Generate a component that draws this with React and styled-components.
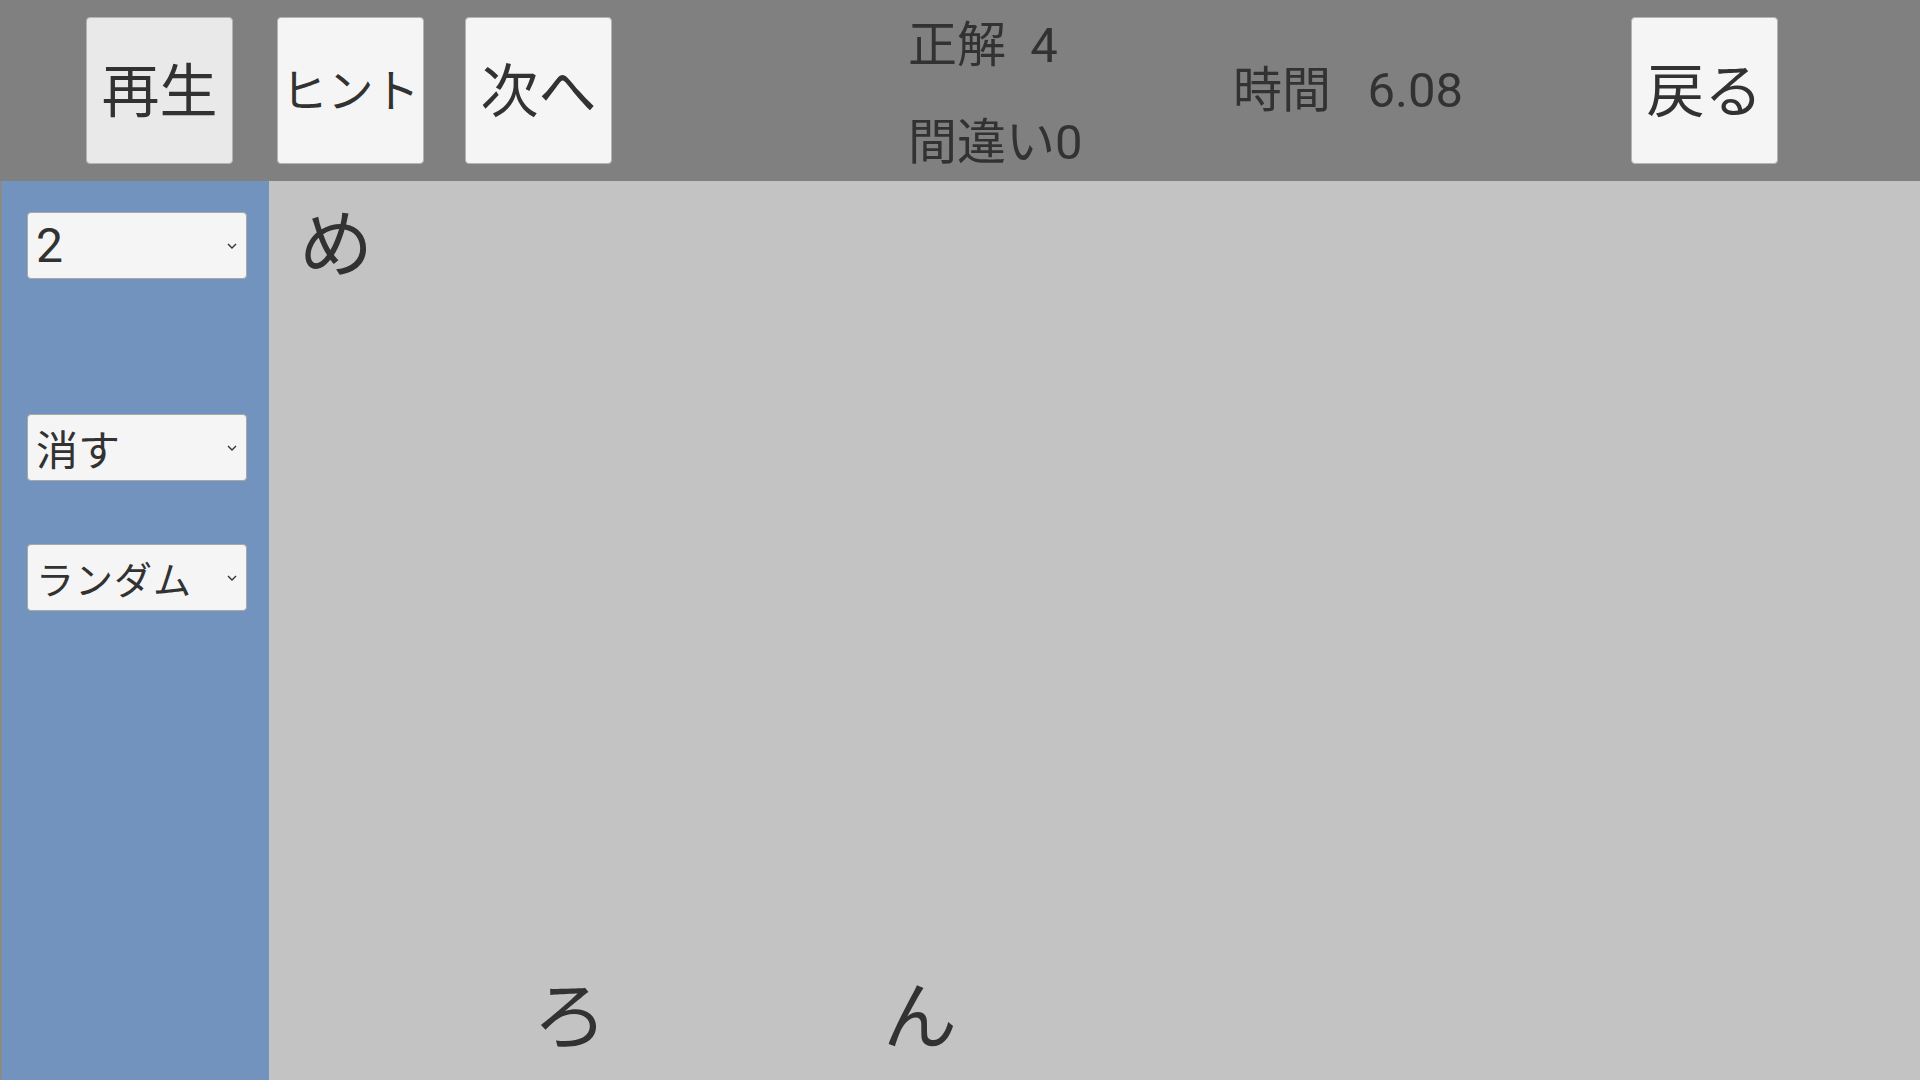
import React from 'react'
import styled, { createGlobalStyle } from 'styled-components'

const Global = createGlobalStyle`
    html, body {
        margin: 0;
        padding: 0;
        width: 1920px;
        height: 1080px;
        overflow: hidden;
        font-family: Roboto, "Noto Sans CJK JP", sans-serif;
        color: #323232;
    }
`;

const Screen = styled.div`
    width: 1920px;
    height: 1080px;
    display: flex;
    flex-direction: column;
`;

const Header = styled.div`
    height: 181px;
    flex-shrink: 0;
    background: #808080;
    display: flex;
    align-items: center;
    padding-left: 86px;
    box-sizing: border-box;
`;

const Button = styled.div`
    width: 147px;
    height: 147px;
    box-sizing: border-box;
    margin-right: ${p => p.$gap || 0}px;
    padding-bottom: 8px;
    background: ${p => (p.$pressed ? '#e9e9e9' : '#f5f5f5')};
    border: 1px solid #b4b4b4;
    border-radius: 4px;
    display: flex;
    align-items: center;
    justify-content: center;
    font-family: "Noto Sans CJK JP", sans-serif;
    font-size: ${p => p.$size || 58}px;
    white-space: nowrap;
    overflow: hidden;
`;

const Score = styled.div`
    width: 325px;
    margin-left: 296px;
    height: 181px;
    display: flex;
    flex-direction: column;
    justify-content: space-between;
    padding: 14px 0 6px;
    box-sizing: border-box;
    font-size: 49px;
    line-height: 64px;
    white-space: pre;
`;

const Line = styled.div`
    display: flex;
    align-items: center;
`;

const Time = styled.div`
    width: 398px;
    font-size: 49px;
    white-space: pre;
    padding-bottom: 10px;
`;

const Body = styled.div`
    flex: 1;
    display: flex;
`;

const Side = styled.div`
    width: 269px;
    flex-shrink: 0;
    background: #7193be;
    border-left: 2px solid #8a8a8a;
    box-sizing: border-box;
    padding: 31px 0 0 25px;
    display: flex;
    flex-direction: column;
`;

const Select = styled.div`
    width: 220px;
    height: 67px;
    box-sizing: border-box;
    margin-top: ${p => p.$top || 0}px;
    background: #f5f5f5;
    border: 1px solid #a8a8a8;
    border-radius: 4px;
    display: flex;
    align-items: center;
    padding: 0 8px 0 8px;
    font-family: ${p => (p.$num ? 'Roboto' : '"Noto Sans CJK JP"')}, sans-serif;
    font-size: ${p => p.$size || 42}px;
    letter-spacing: ${p => p.$spacing || 0}px;
`;

const Label = styled.span`
    flex: 1;
    white-space: nowrap;
`;

const Main = styled.div`
    flex: 1;
    background: #c3c3c3;
    display: flex;
    flex-direction: column;
    justify-content: space-between;
    padding: 0 0 19px 30px;
    font-family: "Noto Sans CJK JP", sans-serif;
    font-size: 74px;
`;

const Target = styled.div`
    line-height: 100px;
    margin-top: 8px;
`;

const Answers = styled.div`
    display: flex;
    line-height: 100px;
`;

const Kana = styled.span`
    margin-left: ${p => p.$left}px;
`;

const Chevron = () => (
    <svg width="12" height="8" viewBox="0 0 12 8">
        <path d="M2 2 L6 6 L10 2" fill="none" stroke="#333" strokeWidth="1.4" />
    </svg>
)

const App = () => {
  return (
    <Screen>
        <Global />
        <Header>
            <Button $pressed $gap={44}>再生</Button>
            <Button $gap={41} $size={46}>ヒント</Button>
            <Button>次へ</Button>
            <Score>
                <Line>{'正解  4'}</Line>
                <Line>間違い0</Line>
            </Score>
            <Time>{'時間   6.08'}</Time>
            <Button>戻る</Button>
        </Header>
        <Body>
            <Side>
                <Select $num $size={48}><Label>2</Label><Chevron /></Select>
                <Select $top={135}><Label>消す</Label><Chevron /></Select>
                <Select $top={63} $size={38} $spacing={1}><Label>ランダム</Label><Chevron /></Select>
            </Side>
            <Main>
                <Target>め</Target>
                <Answers>
                    <Kana $left={234}>ろ</Kana>
                    <Kana $left={276}>ん</Kana>
                </Answers>
            </Main>
        </Body>
    </Screen>
  )
}

export default App
